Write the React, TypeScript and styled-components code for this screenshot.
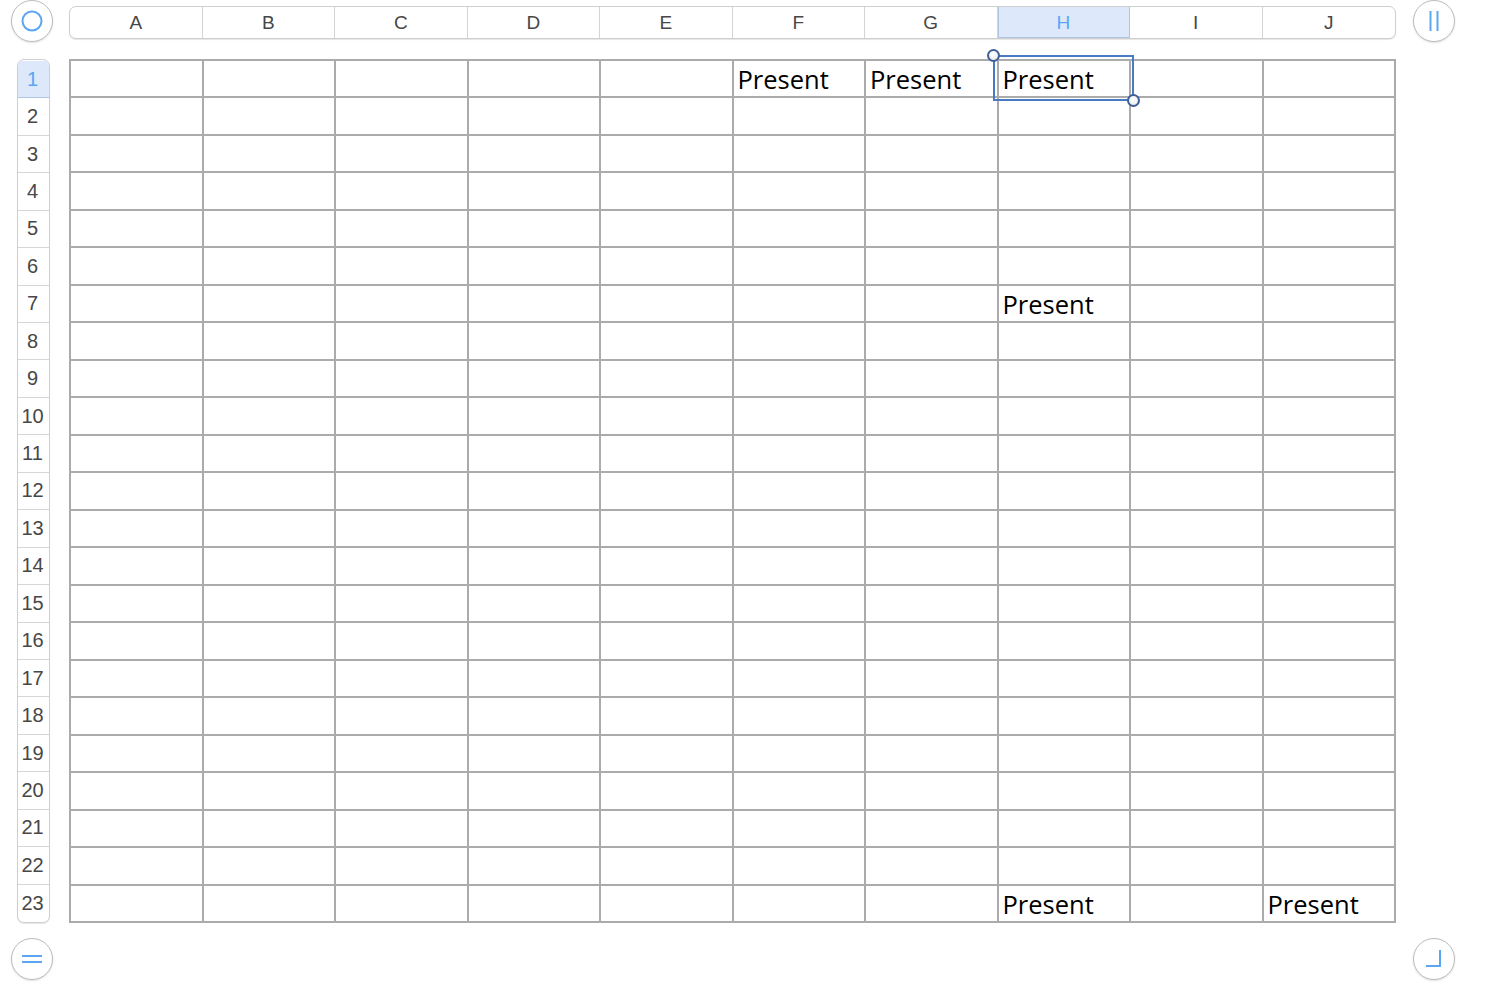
import React from "react";
import styled, { createGlobalStyle } from "styled-components";

const Global = createGlobalStyle`
  html, body { margin: 0; padding: 0; background: #ffffff; }
  body { font-family: "Liberation Sans", Arial, sans-serif; }
`;

const COLS = ["A", "B", "C", "D", "E", "F", "G", "H", "I", "J"];
const ROWS = 23;
const SELECTED_COL = 7;
const SELECTED_ROW = 0;
const ACCENT = "#5aa6f3";

const data: Record<string, string> = {
  "0-5": "Present",
  "0-6": "Present",
  "0-7": "Present",
  "6-7": "Present",
  "22-7": "Present",
  "22-9": "Present",
};

const Page = styled.div`
  display: grid;
  grid-template-columns: 42px 1327px 42px;
  grid-template-rows: 42px 864px 42px;
  column-gap: 16px;
  row-gap: 17px;
  padding-left: 11px;
  width: 1494px;
  height: 984px;
  box-sizing: border-box;
`;

const RoundButton = styled.div<{ $bottom?: boolean }>`
  width: 42px;
  height: 42px;
  box-sizing: border-box;
  border-radius: 50%;
  border: 1px solid #bdbdbd;
  box-shadow: 0 1px 2px rgba(0, 0, 0, 0.12);
  background: #fff;
  display: flex;
  align-items: center;
  justify-content: center;
  margin-top: ${(p) => (p.$bottom ? "-2px" : "0")};
`;

const RightButton = styled(RoundButton)`
  margin-left: 1px;
`;

const ColumnHeader = styled.div`
  align-self: start;
  margin-top: 6px;
  height: 33px;
  box-sizing: border-box;
  border: 1px solid #cfcfcf;
  border-radius: 7px;
  box-shadow: 0 1px 1px rgba(0, 0, 0, 0.1);
  display: grid;
  grid-template-columns: repeat(10, 1fr);
  overflow: hidden;
  background: #fff;
`;

const ColLabel = styled.div<{ $active?: boolean; $last?: boolean }>`
  display: flex;
  align-items: center;
  justify-content: center;
  font-size: 19px;
  color: ${(p) => (p.$active ? ACCENT : "#474747")};
  background: ${(p) => (p.$active ? "#dde9fa" : "transparent")};
  border-right: ${(p) => (p.$last ? "none" : p.$active ? "1px solid #aec5e4" : "1px solid #d4d4d4")};
  box-shadow: ${(p) => (p.$active ? "inset 1px 0 0 #aec5e4, inset 0 -1px 0 #aec5e4" : "none")};
`;

const RowHeader = styled.div`
  justify-self: start;
  margin-left: 6px;
  width: 33px;
  box-sizing: border-box;
  border: 1px solid #cfcfcf;
  border-radius: 7px;
  box-shadow: 0 1px 1px rgba(0, 0, 0, 0.1);
  display: grid;
  grid-template-rows: 1px repeat(23, 1fr);
  overflow: hidden;
  background: #fff;
`;

const RowLabel = styled.div<{ $active?: boolean; $last?: boolean }>`
  display: flex;
  align-items: center;
  justify-content: center;
  font-size: 20px;
  padding-right: 2px;
  color: ${(p) => (p.$active ? ACCENT : "#474747")};
  background: ${(p) => (p.$active ? "#dde9fa" : "transparent")};
  border-bottom: ${(p) => (p.$last ? "none" : p.$active ? "1px solid #aec5e4" : "1px solid #d6d6d6")};
`;

const Spacer = styled.div``;

const GridWrap = styled.div`
  position: relative;
`;

const Sheet = styled.div`
  display: grid;
  grid-template-columns: repeat(10, 1fr);
  grid-template-rows: repeat(23, 1fr);
  width: 1327px;
  height: 864px;
  box-sizing: border-box;
  border-left: 2px solid #ababab;
  border-top: 2px solid #ababab;
`;

const Cell = styled.div`
  border-right: 2px solid #ababab;
  border-bottom: 2px solid #ababab;
  font-family: "Open Sans", "Noto Sans", sans-serif;
  font-size: 25.5px;
  color: #000;
  padding-left: 4px;
  display: flex;
  align-items: flex-end;
  line-height: 34px;
  white-space: nowrap;
  overflow: hidden;
`;

const Selection = styled.div`
  position: absolute;
  left: 924px;
  top: -4px;
  width: 141px;
  height: 46px;
  box-sizing: border-box;
  border: 2px solid #4a7bc2;
  pointer-events: none;
`;

const Handle = styled.div<{ $pos: "tl" | "br" }>`
  position: absolute;
  width: 13px;
  height: 13px;
  box-sizing: border-box;
  border-radius: 50%;
  border: 2px solid #3e5f98;
  background: radial-gradient(circle at 45% 35%, #ffffff 0%, #f2f2f2 55%, #d6d6d6 100%);
  ${(p) => (p.$pos === "tl" ? "left: -8px; top: -8px;" : "right: -8px; bottom: -8px;")}
`;

const Icon = styled.svg`
  display: block;
`;

export default function App() {
  return (
    <>
      <Global />
      <Page>
        <RoundButton>
          <Icon width="24" height="24" viewBox="0 0 24 24">
            <circle cx="12" cy="12" r="9.5" fill="none" stroke={ACCENT} strokeWidth="2" />
          </Icon>
        </RoundButton>
        <ColumnHeader>
          {COLS.map((c, i) => (
            <ColLabel key={c} $active={i === SELECTED_COL} $last={i === COLS.length - 1}>
              {c}
            </ColLabel>
          ))}
        </ColumnHeader>
        <RightButton>
          <Icon width="24" height="24" viewBox="0 0 24 24">
            <line x1="8.5" y1="2" x2="8.5" y2="22" stroke={ACCENT} strokeWidth="2" />
            <line x1="15.5" y1="2" x2="15.5" y2="22" stroke={ACCENT} strokeWidth="2" />
          </Icon>
        </RightButton>

        <RowHeader>
          <Spacer />
          {Array.from({ length: ROWS }, (_, r) => (
            <RowLabel key={r} $active={r === SELECTED_ROW} $last={r === ROWS - 1}>
              {r + 1}
            </RowLabel>
          ))}
        </RowHeader>
        <GridWrap>
          <Sheet>
            {Array.from({ length: ROWS }, (_, r) =>
              COLS.map((_, c) => <Cell key={`${r}-${c}`}>{data[`${r}-${c}`] ?? ""}</Cell>)
            )}
          </Sheet>
          <Selection>
            <Handle $pos="tl" />
            <Handle $pos="br" />
          </Selection>
        </GridWrap>
        <Spacer />

        <RoundButton $bottom>
          <Icon width="24" height="24" viewBox="0 0 24 24">
            <line x1="2" y1="9" x2="22" y2="9" stroke={ACCENT} strokeWidth="2" />
            <line x1="2" y1="15" x2="22" y2="15" stroke={ACCENT} strokeWidth="2" />
          </Icon>
        </RoundButton>
        <Spacer />
        <RightButton $bottom>
          <Icon width="24" height="24" viewBox="0 0 24 24">
            <polyline points="4,19 18,19 18,3" fill="none" stroke={ACCENT} strokeWidth="2" />
          </Icon>
        </RightButton>
      </Page>
    </>
  );
}
